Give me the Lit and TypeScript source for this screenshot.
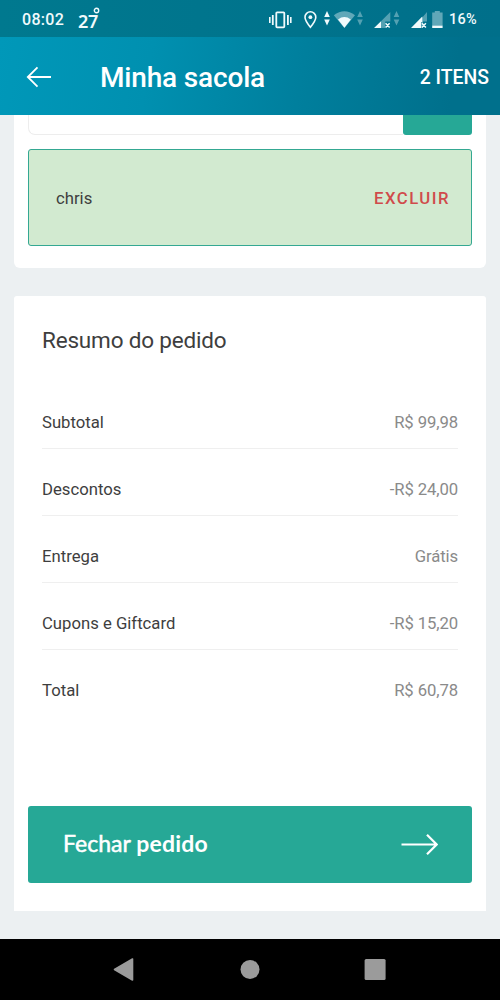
import { LitElement, html, css } from "lit";
import { customElement } from "lit/decorators.js";

const rows: [string, string][] = [
  ["Subtotal", "R$ 99,98"],
  ["Descontos", "-R$ 24,00"],
  ["Entrega", "Grátis"],
  ["Cupons e Giftcard", "-R$ 15,20"],
  ["Total", "R$ 60,78"],
];

@customElement("status-bar")
export class StatusBar extends LitElement {
  static styles = css`
    :host {
      display: flex;
      align-items: center;
      height: 37px;
      box-sizing: border-box;
      padding: 2px 22px 0;
      background: linear-gradient(90deg, #00798f, #006f8a);
      color: #f0fafc;
      font-weight: 500;
    }
    .time { font-size: 16px; letter-spacing: 0.3px; width: 56px; white-space: nowrap; }
    .temp { display: flex; font: 600 18px/20px "Noto Sans", sans-serif; padding-top: 3px; letter-spacing: -0.4px; }
    .temp svg { margin: -4px 0 0 -5px; }
    .icons { margin-left: auto; display: block; margin-top: -2px; }
    .level { font-size: 14.5px; letter-spacing: 0.3px; width: 29px; margin-left: 5px; white-space: nowrap; }
  `;
  render() {
    return html`
      <span class="time">08:02</span>
      <span class="temp">27<svg width="7" height="7"><circle cx="3.5" cy="3.5" r="2.2" fill="none" stroke="#f0fafc" stroke-width="1.4" /></svg></span>
      <svg class="icons" width="176" height="36" viewBox="268 0 176 36" fill="#f0fafc">
        <rect x="276.3" y="11.3" width="8" height="15" rx=".8" fill="none" stroke="#f0fafc" stroke-width="1.8" />
        <path d="M269 16h1.6v6H269zM271.9 14h1.8v10h-1.8zM287 14h1.8v10H287zM290 16h1.6v6H290z" />
        <path d="M310.4 26.2C307 22 305 19 305 16.2a5.4 5.4 0 0 1 10.8 0c0 2.8-2 5.8-5.4 10z" fill="none" stroke="#f0fafc" stroke-width="1.6" />
        <circle cx="310.4" cy="16.2" r="1.9" />
        <path d="M327 10l2.8 6h-5.6zM327 24.5l2.8-6h-5.6z" />
        <path d="M333.8 14.2Q344.4 6.4 355 14.2L344.4 27z" opacity=".4" />
        <path d="M338 18.4Q344.4 13.8 350.8 18.4L344.4 26.8z" />
        <g opacity=".35">
          <path d="M360 10l2.8 6h-5.6zM360 24.5l2.8-6h-5.6zM396.5 10l2.8 6h-5.6zM396.5 24.5l2.8-6h-5.6z" />
          <path d="M381 20.3L390.3 11v9.4h-5V27H381zM421 18L427 11v9.4h-4V27H421z" />
        </g>
        <path d="M374 27l7-6.7V27zM411 27L422.3 15.5v5.5H421v6z" />
        <path d="M385.6 22.2l4 4.4M389.6 22.2l-4 4.4M421.9 22.2l4 4.4M425.9 22.2l-4 4.4" stroke="#f0fafc" stroke-width="1.5" />
        <path d="M434.8 10h5v1.6h2.8V25h-10.4V11.6h2.6z" opacity=".4" />
        <path d="M432.2 24.7h10.4V27h-10.4z" />
      </svg>
      <span class="level">16%</span>
    `;
  }
}

@customElement("app-root")
export class AppRoot extends LitElement {
  static styles = css`
    :host {
      display: flex;
      flex-direction: column;
      width: 500px;
      height: 1000px;
      overflow: hidden;
      background: #ecf0f2;
      font-family: Roboto, "Liberation Sans", sans-serif;
      color: #3e3e3e;
    }
    status-bar { flex: none; }
    .header {
      flex: none;
      display: flex;
      align-items: center;
      height: 78px;
      box-sizing: border-box;
      padding: 1px 11px 0 25px;
      color: #fff;
      background: linear-gradient(100deg, #0098b9 0%, #0090b0 30%, #007f9d 60%, #00708c 90%);
      font-weight: 500;
    }
    .header h1 { margin: 2px auto 0 48px; font-size: 28px; font-weight: 500; letter-spacing: -0.17px; white-space: nowrap; }
    .count { font-size: 19.4px; white-space: nowrap; margin-top: 1px; }
    .main { flex: 1; padding: 0 14px; }
    .coupon { background: #fff; border-radius: 0 0 6px 6px; height: 153px; padding: 0 14px; box-sizing: border-box; }
    .field { display: flex; height: 20px; }
    .input { flex: 1; box-sizing: border-box; border: 1px solid #ededed; border-width: 0 0 1px 1px; border-radius: 0 0 0 7px; }
    .apply { width: 69px; background: #26a896; border-radius: 0 0 3px 3px; }
    .applied {
      display: flex;
      align-items: center;
      justify-content: space-between;
      box-sizing: border-box;
      height: 97px;
      margin-top: 14px;
      padding: 1px 22px 0 27px;
      border: 1.5px solid #34a892;
      border-radius: 3px;
      background: #d2ead0;
      font-size: 16.7px;
    }
    .remove { color: #d04b4b; font-weight: 500; letter-spacing: 1.5px; margin-right: -1px; }
    .summary {
      display: flex;
      flex-direction: column;
      box-sizing: border-box;
      height: 615px;
      margin-top: 28px;
      padding: 29px 14px 28px;
      border-radius: 3px 3px 0 0;
      background: #fff;
    }
    .summary h2 { margin: 0 14px 42px; font-size: 22.5px; letter-spacing: -0.18px; line-height: 30px; font-weight: 400; }
    .row {
      display: flex;
      justify-content: space-between;
      align-items: flex-end;
      box-sizing: border-box;
      height: 67.1px;
      margin: 0 14px;
      padding-bottom: 15px;
      border-bottom: 1px solid #efefef;
      font-size: 16.7px;
      line-height: 20px;
    }
    .row:first-of-type { height: 52px; }
    .row:last-of-type { border-color: transparent; }
    .value { color: #8a8a8a; letter-spacing: -0.1px; }
    .checkout {
      display: flex;
      align-items: center;
      justify-content: space-between;
      box-sizing: border-box;
      height: 77px;
      margin: auto 0 0;
      padding: 0 34px 0 35px;
      border: 0;
      border-radius: 3px;
      background: #26a896;
      color: #fff;
      font: 400 23px Lato, sans-serif;
    }
    .label { padding-bottom: 3px; }
    .label b { letter-spacing: 0.2px; }
    .thin { -webkit-text-stroke: 0.5px #fff; }
    .nav { flex: none; height: 61px; background: #000; display: block; }
  `;
  render() {
    return html`
      <status-bar></status-bar>
      <div class="header">
        <svg width="27" height="24" viewBox="0 0 27 24" fill="none" stroke="#fff" stroke-width="1.8">
          <path d="M12.5 2.4L2.8 12l9.7 9.6M3 12h23" />
        </svg>
        <h1>Minha sacola</h1>
        <span class="count">2 ITENS</span>
      </div>
      <div class="main">
        <section class="coupon">
          <div class="field"><div class="input"></div><div class="apply"></div></div>
          <div class="applied"><span>chris</span><span class="remove">EXCLUIR</span></div>
        </section>
        <section class="summary">
          <h2>Resumo do pedido</h2>
          ${rows.map(([label, value]) => html`<div class="row"><span>${label}</span><span class="value">${value}</span></div>`)}
          <button class="checkout">
            <span class="label"><span class="thin">Fechar</span> <b>pedido</b></span>
            <svg width="37" height="24" viewBox="0 0 37 24" fill="none" stroke="#fff" stroke-width="2.2">
              <path d="M.5 11.5h35M26 1.7l9.7 9.8-9.7 9.8" />
            </svg>
          </button>
        </section>
      </div>
      <svg class="nav" width="500" height="61" viewBox="0 939 500 61" fill="#9b9b9b" stroke="#9b9b9b" stroke-linejoin="round">
        <path d="M114.5 969.5L132.5 959v21z" stroke-width="1.6" />
        <circle cx="250" cy="969.5" r="9.5" stroke="none" />
        <rect x="364.6" y="959" width="21" height="21" rx="1.5" stroke="none" />
      </svg>
    `;
  }
}
